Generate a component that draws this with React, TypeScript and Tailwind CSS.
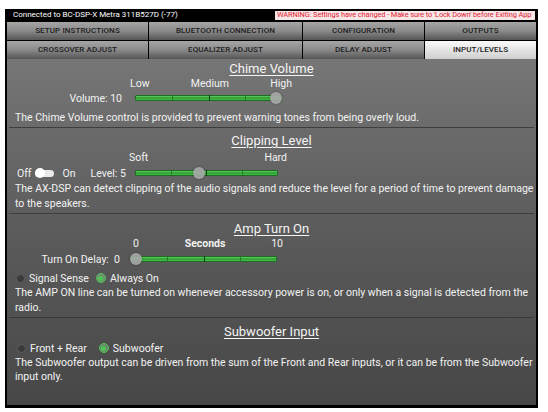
import React from "react";

const tabsTop = [
  { label: "SETUP INSTRUCTIONS", w: "w-[141px]" },
  { label: "BLUETOOTH CONNECTION", w: "w-[153px]" },
  { label: "CONFIGURATION", w: "w-[121px]" },
  { label: "OUTPUTS", w: "flex-1" },
];

const tabsBottom = [
  { label: "CROSSOVER ADJUST", w: "w-[141px]" },
  { label: "EQUALIZER ADJUST", w: "w-[153px]" },
  { label: "DELAY ADJUST", w: "w-[121px]" },
  { label: "INPUT/LEVELS", w: "flex-1", active: true },
];

type Tab = { label: string; w: string; active?: boolean };

const TabRow = ({ tabs }: { tabs: Tab[] }) => (
  <div className="flex h-[18px] gap-[1px] bg-black">
    {tabs.map((t) => (
      <div
        key={t.label}
        className={`${t.w} flex items-center justify-center text-[8px] font-medium tracking-[0.1px] text-[#1c1c1c] ${
          t.active
            ? "bg-gradient-to-b from-[#fafafa] to-[#cfcfcf]"
            : "bg-gradient-to-b from-[#a6a6a6] via-[#8a8a8a] to-[#555555]"
        }`}
      >
        {t.label}
      </div>
    ))}
  </div>
);

// green track, thumb position as percent
const Slider = ({ pos, width }: { pos: number; width: number }) => (
  <div className="relative h-[12px]" style={{ width }}>
    <div className="absolute left-0 right-0 top-[3px] h-[6px] rounded-[1px] border border-[#1d6e22] bg-gradient-to-b from-[#5fd35f] via-[#2e9a34] to-[#49c04b]">
      <div className="absolute left-1/4 top-0 bottom-0 w-px bg-[#2a7a2e]" />
      <div className="absolute left-1/2 top-[-1px] bottom-[-1px] w-px bg-[#10401a]" />
      <div className="absolute left-3/4 top-0 bottom-0 w-px bg-[#2a7a2e]" />
    </div>
    <div
      className="absolute top-0 h-[12px] w-[12px] -translate-x-1/2 rounded-full bg-[#a9a9a9]/90 shadow-[0_0_2px_rgba(0,0,0,0.4)]"
      style={{ left: `${pos}%` }}
    />
  </div>
);

const Radio = ({ checked, label }: { checked?: boolean; label: string }) => (
  <div className="flex h-[12px] items-center gap-[4px]">
    {checked ? (
      <span className="flex h-[10px] w-[10px] items-center justify-center rounded-full border border-[#4cc552] bg-[#9fdc9f]/40">
        <span className="h-[5px] w-[5px] rounded-full bg-[#4cc552]" />
      </span>
    ) : (
      <span className="h-[9px] w-[9px] rounded-full border border-[#5e5e5e] bg-[#3a3a3a]" />
    )}
    <span>{label}</span>
  </div>
);

const Title = ({ children }: { children: React.ReactNode }) => (
  <div className="text-center text-[13px] leading-[16px] text-[#f4f4f4] underline underline-offset-2">{children}</div>
);

export default function App() {
  return (
    <div className="min-h-[412px] bg-white pl-[5px] pt-[9px]" style={{ fontFamily: "Roboto, 'Noto Sans', sans-serif" }}>
      <div className="flex h-[399px] w-[533px] flex-col bg-black px-[2px] pb-[3px]">
        <div className="flex h-[12px] items-center justify-between pl-[6px] pr-[1px]">
          <span className="text-[8px] text-white">Connected to BC-DSP-X Metra 311B527D (-77)</span>
          <span className="flex h-[9px] w-[260px] items-center bg-[#f6e6e8] px-[2px] text-[7.4px] tracking-[-0.1px] text-[#e3212f]">
            WARNING: Settings have changed - Make sure to 'Lock Down' before Exiting App
          </span>
        </div>
        <div className="flex flex-col gap-[1px] pt-[1px]">
          <TabRow tabs={tabsTop} />
          <TabRow tabs={tabsBottom} />
        </div>
        <div className="flex flex-1 flex-col bg-gradient-to-b from-[#767676] via-[#5b5b5b] to-[#474747] text-[10.5px] leading-[15px] text-[#f2f2f2]">
          {/* Chime Volume */}
          <div className="mx-[2px] flex h-[69px] flex-col border-b border-[#3e3e3e] pt-[2px]">
            <Title>Chime Volume</Title>
            <div className="ml-[121px] flex w-[162px] justify-between pt-[1px] leading-[12px]">
              <span>Low</span>
              <span>Medium</span>
              <span>High</span>
            </div>
            <div className="flex h-[12px] items-center pt-[2px] box-content">
              <span className="w-[113px] text-right">Volume: 10</span>
              <div className="ml-[13px]">
                <Slider pos={96} width={147} />
              </div>
            </div>
            <p className="pl-[6px] pt-[6px]">The Chime Volume control is provided to prevent warning tones from being overly loud.</p>
          </div>

          {/* Clipping Level */}
          <div className="mx-[2px] flex h-[86px] flex-col border-b border-[#3e3e3e] pt-[5px]">
            <Title>Clipping Level</Title>
            <div className="ml-[120px] flex w-[158px] justify-between pt-[3px] leading-[12px]">
              <span>Soft</span>
              <span>Hard</span>
            </div>
            <div className="box-content flex h-[12px] items-center pl-[8px] pt-[3px]">
              <span>Off</span>
              <span className="relative ml-[3px] flex h-[10px] w-[20px] items-center">
                <span className="h-[7px] w-[19px] rounded-full bg-[#e9e9e9]" />
                <span className="absolute left-0 h-[10px] w-[10px] rounded-full bg-white" />
              </span>
              <span className="ml-[8px]">On</span>
              <span className="ml-[15px]">Level: 5</span>
              <div className="ml-[9px]">
                <Slider pos={45} width={143} />
              </div>
            </div>
            <p className="pl-[6px] pt-[2px]">
              The AX-DSP can detect clipping of the audio signals and reduce the level for a period of time to prevent damage to
              the speakers.
            </p>
          </div>

          {/* Amp Turn On */}
          <div className="mx-[2px] flex h-[104px] flex-col border-b border-[#3a3a3a] pt-[7px]">
            <Title>Amp Turn On</Title>
            <div className="ml-[124px] flex w-[150px] justify-between pt-[1px] leading-[12px]">
              <span>0</span>
              <span className="font-bold">Seconds</span>
              <span>10</span>
            </div>
            <div className="box-content flex h-[12px] items-center pt-[3px]">
              <span className="w-[111px] text-right">Turn On Delay:&nbsp; 0</span>
              <div className="ml-[10px]">
                <Slider pos={4} width={147} />
              </div>
            </div>
            <div className="flex items-center gap-[7px] pl-[7px] pt-[7px]">
              <Radio label="Signal Sense" />
              <Radio checked label="Always On" />
            </div>
            <p className="pl-[6px] pt-[1px]">
              The AMP ON line can be turned on whenever accessory power is on, or only when a signal is detected from the radio.
            </p>
          </div>

          {/* Subwoofer Input */}
          <div className="mx-[2px] flex flex-1 flex-col pt-[6px]">
            <Title>Subwoofer Input</Title>
            <div className="flex items-center gap-[12px] pl-[8px] pt-[2px]">
              <Radio label="Front + Rear" />
              <Radio checked label="Subwoofer" />
            </div>
            <p className="pl-[6px] pt-[2px] leading-[14px]">
              The Subwoofer output can be driven from the sum of the Front and Rear inputs, or it can be from the Subwoofer input
              only.
            </p>
          </div>
        </div>
      </div>
    </div>
  );
}
